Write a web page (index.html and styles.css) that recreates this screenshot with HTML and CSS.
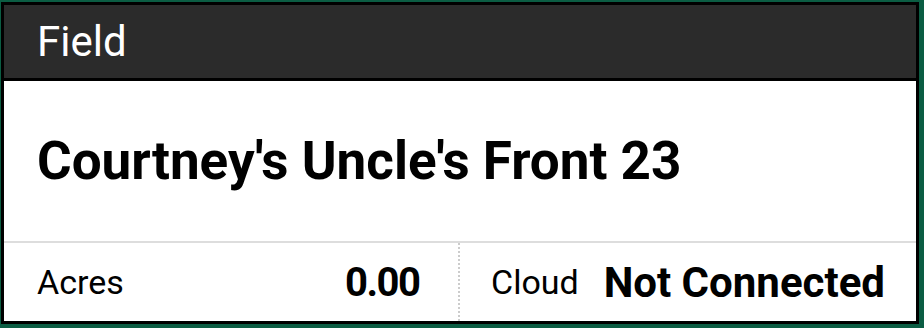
FILE: index.html
```html
<!DOCTYPE html>
<html>
<head>
<meta charset="utf-8">
<link rel="stylesheet" href="styles.css">
</head>
<body>
<div class="card">
  <div class="card-header">Field</div>
  <div class="card-title">Courtney's Uncle's Front 23</div>
  <div class="stats">
    <div class="stat stat-left">
      <span class="stat-label">Acres</span>
      <span class="stat-value stat-value-num">0.00</span>
    </div>
    <div class="stat stat-right">
      <span class="stat-label">Cloud</span>
      <span class="stat-value">Not Connected</span>
    </div>
  </div>
</div>
</body>
</html>
```
FILE: styles.css
```css
html, body {
  margin: 0;
  padding: 0;
  background: #0b5d43;
  width: 924px;
  height: 328px;
  overflow: hidden;
}
body {
  padding: 2px 5px 4px 1px;
  box-sizing: border-box;
  font-family: Roboto, "Liberation Sans", sans-serif;
}
.card {
  height: 100%;
  box-sizing: border-box;
  border: 3px solid #000;
  background: #fff;
  display: flex;
  flex-direction: column;
}
.card-header {
  background: #2b2b2b;
  color: #fff;
  height: 73px;
  border-bottom: 3px solid #000;
  font-size: 42px;
  font-weight: 400;
  line-height: 73px;
  padding-left: 33px;
  box-sizing: content-box;
}
.card-title {
  flex: 1;
  display: flex;
  align-items: center;
  padding-left: 33px;
  font-size: 53px;
  font-weight: 700;
  color: #000;
  border-bottom: 2px solid #ddd;
}
.stats {
  height: 78px;
  display: flex;
}
.stat {
  width: 50%;
  box-sizing: border-box;
  display: flex;
  align-items: center;
  justify-content: space-between;
}
.stat-left {
  padding: 0 40px 0 33px;
  border-right: 2px dotted #ccc;
}
.stat-right {
  padding: 0 31px 0 31px;
}
.stat-label {
  font-size: 34px;
  color: #000;
}
.stat-value {
  font-size: 42px;
  font-weight: 700;
  color: #000;
}
.stat-value-num {
  font-size: 40px;
  letter-spacing: -1.5px;
  margin-right: -1.5px;
}
```
